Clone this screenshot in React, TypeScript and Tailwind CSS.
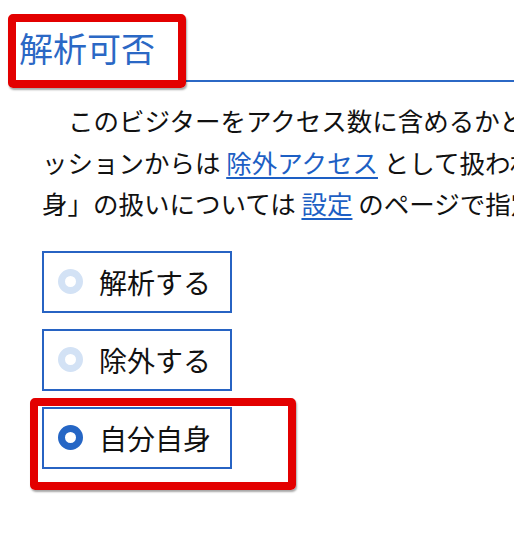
import React from "react";

const font = { fontFamily: '"Noto Sans CJK JP", "Noto Sans", sans-serif' };

function Radio({ label, checked }: { label: string; checked?: boolean }) {
  return (
    <div className="flex h-[62px] w-[190px] items-center border-2 border-[#2763c3] pl-[14px]">
      <span
        className={
          "box-border h-[25px] w-[25px] shrink-0 rounded-full border-[7px] bg-white " +
          (checked ? "border-[#2566c5]" : "border-[#d3e2f5]")
        }
      />
      <span className="ml-[16px] text-[28px] leading-none text-[#111]">{label}</span>
    </div>
  );
}

export default function App() {
  return (
    <div className="relative h-[536px] w-[514px] overflow-hidden bg-white" style={font}>
      <div className="ml-[12px] mt-[28px] w-[600px] border-b-2 border-[#2b68c5] pb-[12px] pl-[7px]">
        <h2 className="text-[34px] leading-[40px] font-normal text-[#2b68c5]">解析可否</h2>
      </div>
      <p className="ml-[42px] mt-[17px] w-[700px] whitespace-nowrap indent-[26px] text-[25.5px] leading-[41.5px] text-[#111]">
        このビジターをアクセス数に含めるかどうかを指定します。
        <br />
        ッションからは <a className="text-[#1d5fc4] underline underline-offset-[4px]">除外アクセス</a> として扱われます。
        <br />
        身」の扱いについては <a className="text-[#1d5fc4] underline underline-offset-[4px]">設定</a> のページで指定します。
      </p>
      <div className="ml-[42px] mt-[27px] flex flex-col gap-[16px]">
        <Radio label="解析する" />
        <Radio label="除外する" />
        <Radio label="自分自身" checked />
      </div>
      <div className="pointer-events-none absolute left-[8px] top-[14px] h-[74px] w-[178px] rounded-[5px] border-[8px] border-[#e30000] shadow-[1px_2px_2px_rgba(0,0,0,0.35)]" />
      <div className="pointer-events-none absolute left-[30px] top-[398px] h-[92px] w-[266px] rounded-[5px] border-[8px] border-[#e30000] shadow-[1px_2px_2px_rgba(0,0,0,0.35)]" />
    </div>
  );
}
